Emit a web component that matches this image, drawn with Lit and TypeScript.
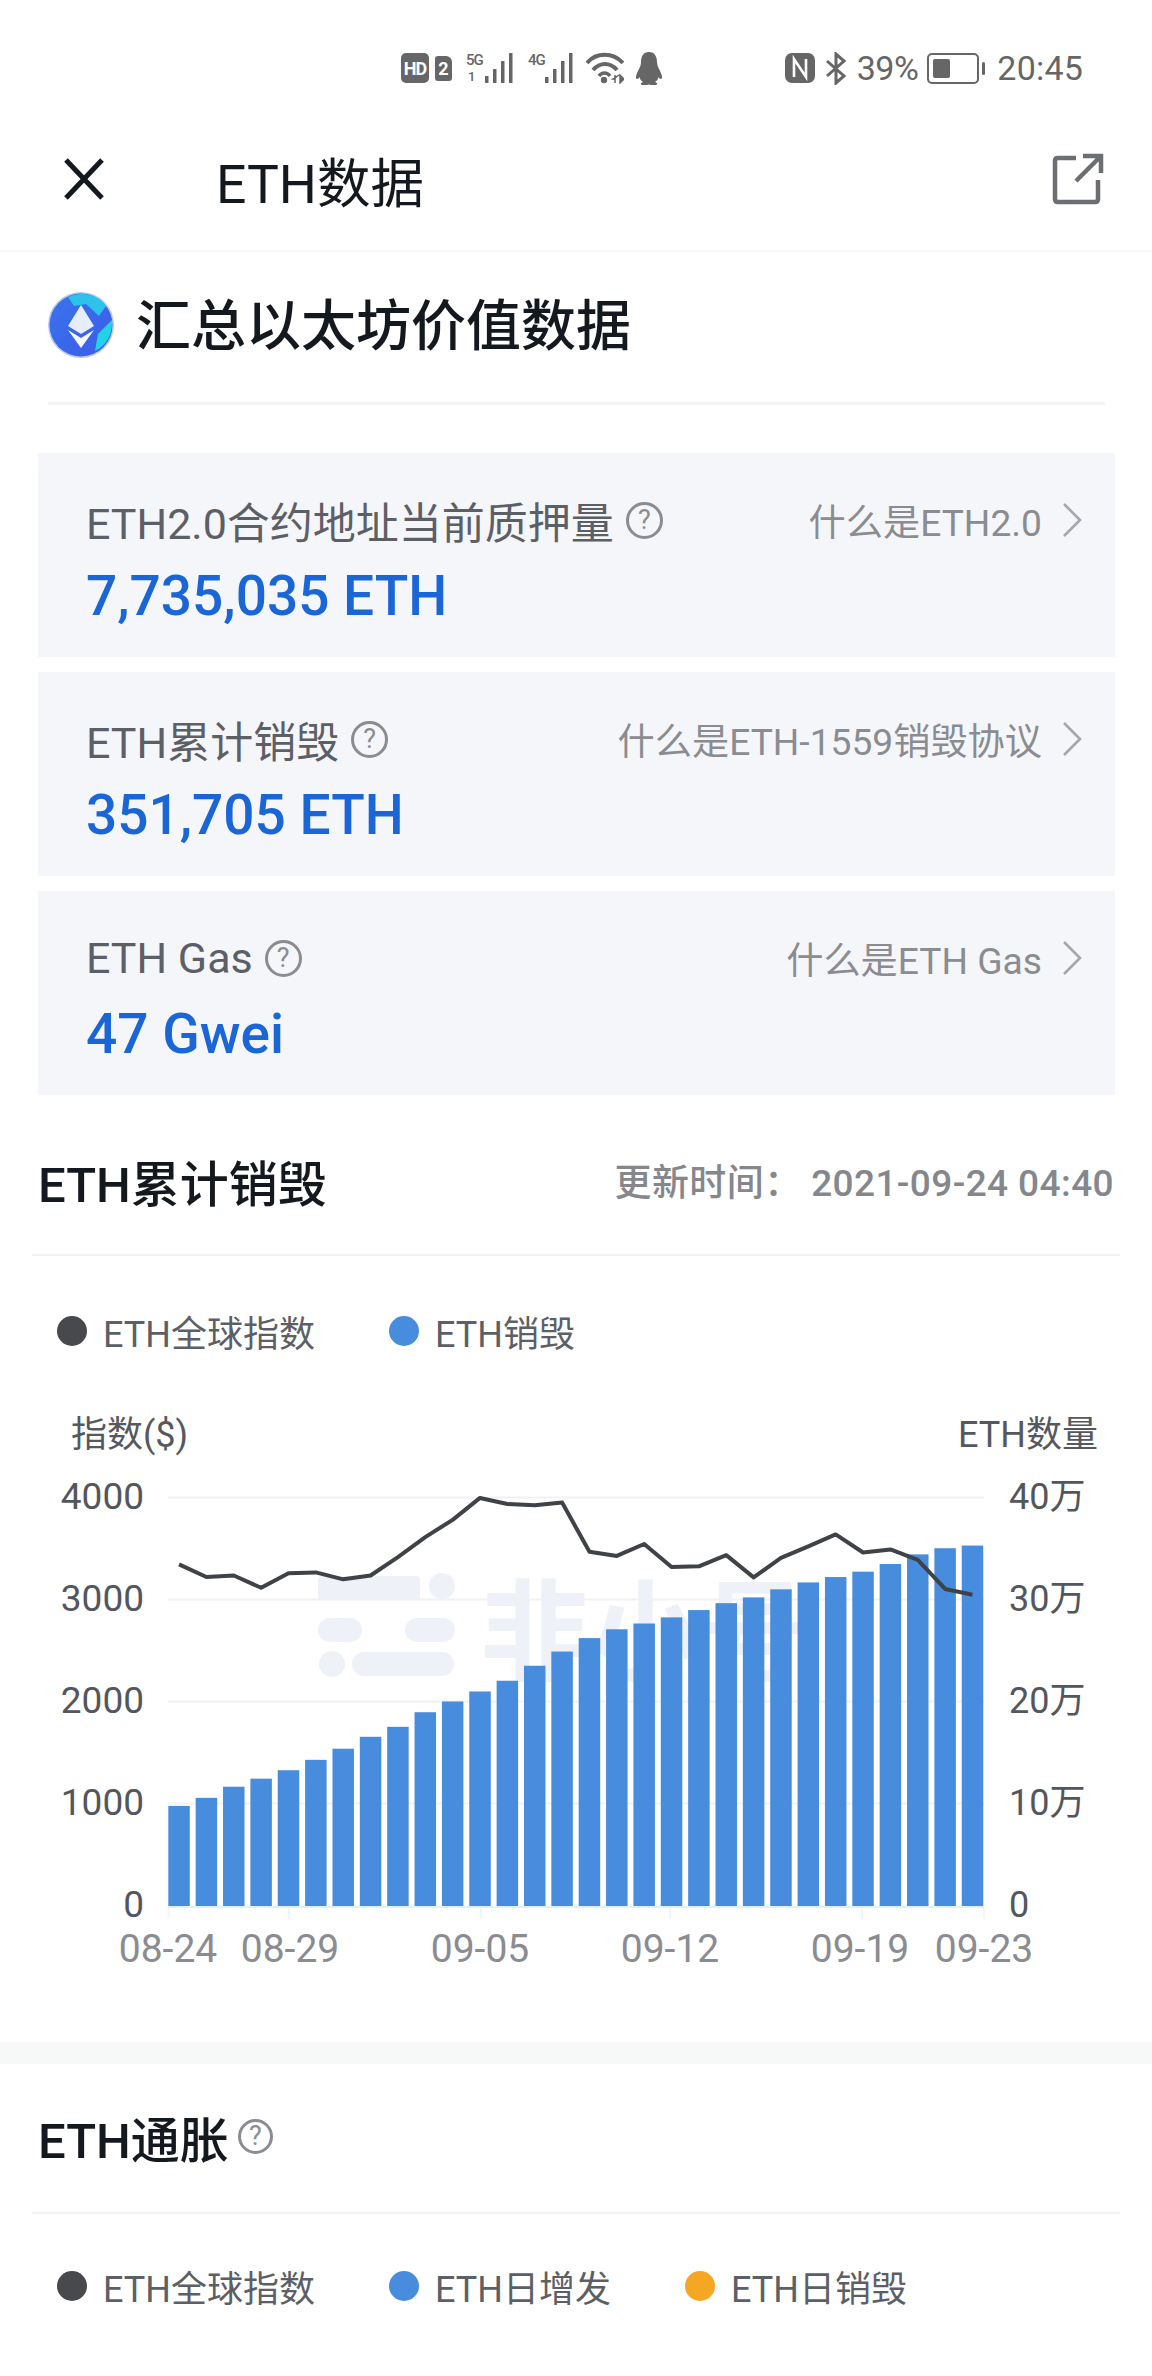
import { LitElement, html, css, svg } from "lit";
import { customElement } from "lit/decorators.js";

const BAR_TOPS = [1113,1092,1063,1042,1020,993,964,933,907,869,841,815,787,748,711,676,653,638,622,603,585,570,549,531,517,503,483,458,442,435];
const LINE = [484,517,513,545,507,505,523,513,465,413,368,311,327,330,323,451,462,431,491,489,460,518,467,437,406,453,445,472,548,563];
const SVG_TOP = 1458;
const toY = (z: number) => 1380 + z / 2.604 - SVG_TOP - 1.5;
const BASE = 1906 - SVG_TOP;
const GRID = [0, 1, 2, 3].map((i) => 1497.5 + i * 102 - SVG_TOP);
const LEFT = ["4000", "3000", "2000", "1000", "0"];
const RIGHT = ["40万", "30万", "20万", "10万", "0"];
const XL: [string, number][] = [["08-24", 168], ["08-29", 290], ["09-05", 480], ["09-12", 670], ["09-19", 860], ["09-23", 984]];
const TICKS = [168.5, 289, 481, 670, 862, 984];
const barX = (i: number) => 168.3 + i * 27.36;

const q = () => html`<span class="q">?</span>`;
const chev = html`<svg class="chev" viewBox="0 0 22 36"><path d="M3 2 L19 18 L3 34" fill="none" stroke="#a4a6ab" stroke-width="2.6"/></svg>`;

@customElement("app-root")
export class AppRoot extends LitElement {
  static styles = css`
    :host { display: block; width: 1152px; height: 2376px; overflow: hidden; background: #fff;
      font-family: Roboto, "Noto Sans CJK SC", sans-serif; color: #14181f; }
    * { box-sizing: border-box; }
    .status { height: 100px; padding: 36px 69px 0 401px; display: flex; align-items: center; color: #666; }
    .status svg { display: block; flex: none; }
    .hd { width: 28px; height: 30px; border-radius: 5px; background: #666; color: #fff; font-size: 18px; font-weight: 700; letter-spacing: -1px;
      display: flex; align-items: center; justify-content: center; }
    .sim2 { width: 17px; height: 25px; border-radius: 3px 6px 3px 3px; background: #666; color: #fff; font-size: 18px; font-weight: 700;
      margin-left: 6px; display: flex; align-items: center; justify-content: center; }
    .net { position: relative; width: 50px; height: 32px; }
    .net b { position: absolute; left: 0; top: 1px; font-size: 15px; line-height: 14px; font-weight: 500; letter-spacing: -1px; }
    .net em { position: absolute; left: 2px; top: 18px; font-size: 13px; line-height: 13px; font-style: normal; font-weight: 500; }
    .net svg { position: absolute; left: 0; top: 0; }
    .batt { width: 52px; height: 31px; border: 2.5px solid #666; border-radius: 5px; padding: 4px; }
    .batt i { display: block; width: 17px; height: 100%; background: #666; border-radius: 2px; }
    .nub { width: 3px; height: 13px; background: #666; border-radius: 2px; margin-left: 3px; }
    .pct { font-size: 34px; margin-left: 10px; margin-right: 9px; letter-spacing: -0.5px; }
    .time { font-size: 34px; margin-left: 12px; letter-spacing: 0.2px; }
    .sp { flex: 1; }

    .nav { height: 152px; padding: 8px 48px 0 64px; display: flex; align-items: center; border-bottom: 2px solid #f8f8f8; }
    .nav h1 { margin: 0 0 0 112px; font-size: 53.500px; font-weight: 400; flex: 1; }
    .hero { margin: 0 47px 0 48px; height: 153px; padding-bottom: 7px; border-bottom: 3px solid #f3f4f6; display: flex; align-items: center; gap: 22px; }
    .hero svg { margin-top: 3px; }
    .hero h2 { margin: 0 0 6px; font-size: 55px; font-weight: 500; }
    .cards { margin-top: 48px; padding: 0 37px 0 38px; display: flex; flex-direction: column; gap: 15px; }
    .card { height: 204px; background: #f5f6fa; padding: 42px 32px 0 48px; }
    .row { display: flex; align-items: center; height: 50px; }
    .label { font-size: 43px; color: #5c5f65; }
    .q { display: inline-flex; width: 37px; height: 37px; margin-left: 12px; border: 3px solid #8a8c91; border-radius: 50%; color: #8a8c91;
      align-items: center; justify-content: center; font-size: 27px; line-height: 1; flex: none; }
    .link { margin-left: auto; font-size: 37.200px; color: #8a8c91; }
    .chev { width: 22px; height: 36px; margin-left: 19px; flex: none; }
    .value { margin-top: 16px; font-size: 55px; line-height: 70px; font-weight: 500; color: #1a66d6; }

    .head { height: 161px; margin: 0 32px; padding: 11px 6px 0; display: flex; align-items: center; border-bottom: 2px solid #f2f3f5; }
    .head.short { height: 150px; padding: 0 6px 4px; }
    .head h3 { margin: 0; font-size: 49px; font-weight: 500; }
    .head .q { width: 35px; height: 35px; margin-left: 9px; }
    .upd { margin-left: auto; font-size: 37px; font-weight: 500; letter-spacing: 0.4px; color: #85878c; }
    .legend { height: 150px; padding-left: 57px; display: flex; align-items: center; gap: 74px; }
    .legend.low { height: 153px; padding-bottom: 9px; }
    .li { display: flex; align-items: center; gap: 16px; font-size: 36px; color: #5c5f65; }
    .dot { width: 30px; height: 30px; border-radius: 50%; flex: none; }
    .axis { height: 50px; margin-bottom: 2px; padding: 0 54px 0 71px; display: flex; justify-content: space-between; align-items: center; font-size: 36px; color: #55585e; }
    .chart { display: block; width: 1152px; height: 584px; }
    .chart text { font-family: Roboto, "Noto Sans CJK SC", sans-serif; font-size: 37px; }
    .chart text.rt { font-size: 36px; }
    .chart text.xl { font-size: 39px; }
    .band { height: 22px; background: #f7f8f8; }
  `;

  private chart() {
    const pts = LINE.map((z, i) => `${barX(i) + 10.75},${toY(z)}`).join(" ");
    return html`<svg class="chart" viewBox="0 0 1152 584">
      ${GRID.map((y) => svg`<line x1="168" x2="984" y1=${y} y2=${y} stroke="#f1f2f5" stroke-width="2"/>`)}
      <g fill="#eef1f7">
        <rect x="318" y="118" width="102" height="24" rx="4"/><circle cx="442" cy="128" r="13"/>
        <rect x="318" y="160" width="44" height="24" rx="12"/><rect x="405" y="160" width="50" height="24" rx="12"/>
        <circle cx="332" cy="206" r="13"/><rect x="352" y="194" width="102" height="24" rx="12"/>
      </g>
      <text x="480" y="214" style="font-size:110px;font-weight:700" fill="#eef1f7">非小号</text>
      ${BAR_TOPS.map((z, i) => svg`<rect x=${barX(i)} y=${toY(z)} width="21.5" height=${BASE - toY(z)} fill="#488ddd"/>`)}
      <line x1="168" x2="984" y1=${BASE + 1} y2=${BASE + 1} stroke="#def0fd" stroke-width="2"/>
      ${TICKS.map((x) => svg`<line x1=${x} x2=${x} y1=${BASE + 2} y2=${BASE + 13} stroke="#eef5fb" stroke-width="2"/>`)}
      <polyline points=${pts} fill="none" stroke="#3f4246" stroke-width="4" stroke-linejoin="round"/>
      ${LEFT.map((t, i) => svg`<text x="144" y=${1497.5 + i * 102 - SVG_TOP + 11.5} text-anchor="end" fill="#53565c">${t}</text>`)}
      ${RIGHT.map((t, i) => svg`<text class="rt" x="1009" y=${1497.5 + i * 102 - SVG_TOP + 11.5} fill="#53565c">${t}</text>`)}
      ${XL.map(([t, x]) => svg`<text class="xl" x=${x} y="504" text-anchor="middle" fill="#8a8c91">${t}</text>`)}
    </svg>`;
  }

  render() {
    return html`
      <div class="status">
        <span class="hd">HD</span><span class="sim2">2</span>
        <span class="net" style="margin-left:14px"><b>5G</b><em>1</em><svg width="50" height="32" viewBox="0 0 50 32" fill="#666">
          <rect x="19" y="24" width="3.500" height="7"/><rect x="27" y="17" width="3.500" height="14"/><rect x="35" y="9" width="3.500" height="22"/><rect x="43" y="1" width="3.500" height="30"/></svg></span>
        <span class="net" style="margin-left:12px;width:50px"><b>4G</b><svg width="50" height="32" viewBox="0 0 50 32" fill="#666">
          <rect x="17" y="25" width="3.500" height="6"/><rect x="25" y="17" width="3.500" height="14"/><rect x="33" y="9" width="3.500" height="22"/><rect x="41" y="1" width="3.500" height="30"/></svg></span>
        <svg style="margin-left:8px" width="38" height="32" viewBox="0 0 38 32" fill="none" stroke="#666" stroke-width="4">
          <path d="M1 11 C10 0 27 0 37 11"/><path d="M7 18 C14 10 24 10 31 18"/><path d="M13 24 C16 20 21 20 24 24" stroke-width="3.500"/><circle cx="18" cy="28" r="3.200" fill="#666" stroke="none"/><path d="M29 23 V31 M33 23 L27 27 H29 M34 23 V31 L38 27 Z" stroke-width="1.500" fill="#666"/></svg>
        <svg style="margin-left:10px" width="30" height="33" viewBox="0 0 30 33" fill="#666">
          <path d="M15 0 C9 0 7 5 7 10 C7 13 6 15 4 19 C2 23 1 27 3 27 C4 27 5 26 5.500 25 C6 27 7 29 9 30 C6 31 6 33 9 33 L13 33 Q15 32 17 33 L21 33 C24 33 24 31 21 30 C23 29 24 27 24.500 25 C25 26 26 27 27 27 C29 27 28 23 26 19 C24 15 23 13 23 10 C23 5 21 0 15 0 Z"/></svg>
        <span class="sp"></span>
        <svg width="30" height="30" viewBox="0 0 30 30"><rect width="30" height="30" rx="7" fill="#666"/><path d="M9 24 V6 L21 24 V6" fill="none" stroke="#fff" stroke-width="2.600"/></svg>
        <svg style="margin-left:10px" width="22" height="33" viewBox="0 0 22 33" fill="none" stroke="#666" stroke-width="3"><path d="M2 9 L19 24 L11 31 V2 L19 9 L2 24"/></svg>
        <span class="pct">39%</span>
        <span class="batt"><i></i></span><span class="nub"></span>
        <span class="time">20:45</span>
      </div>
      <div class="nav">
        <svg width="40" height="42" viewBox="0 0 40 42" stroke="#14181f" stroke-width="5" fill="none"><path d="M2 2 L38 40 M38 2 L2 40"/></svg>
        <h1>ETH数据</h1>
        <svg width="52" height="52" viewBox="0 0 52 52" fill="none" stroke="#6b6e73" stroke-width="4.500"><path d="M24 5 H6 Q3 5 3 8 V46 Q3 49 6 49 H43 Q46 49 46 46 V27"/><path d="M24 28 L49 3 M31 3 H49 V20"/></svg>
      </div>
      <div class="hero">
        <svg width="66" height="66" viewBox="0 0 66 66">
          <defs><linearGradient id="g" x1="0" y1="0" x2="1" y2="1"><stop offset="0" stop-color="#3a74ea"/><stop offset="1" stop-color="#3b5bea"/></linearGradient></defs>
          <circle cx="33" cy="33" r="33" fill="#b9c6f4"/><circle cx="33" cy="33" r="31.500" fill="url(#g)"/>
          <path d="M20 5 C34 -1 50 2 58 14 L51 24 L38 12 L26 14 Z" fill="#2bc3ea"/>
          <path d="M64 28 C65 42 58 54 47 59 L50 42 Z" fill="#22d3e6"/>
          <path d="M33 13 L20 34 L33 42 L46 34 Z" fill="#e6edfc"/><path d="M20 38 L33 46 L46 38 L33 56 Z" fill="#f6f8fe"/>
        </svg>
        <h2>汇总以太坊价值数据</h2>
      </div>
      <div class="cards">
        <div class="card"><div class="row"><span class="label">ETH2.0合约地址当前质押量</span>${q()}<span class="link">什么是ETH2.0</span>${chev}</div><div class="value">7,735,035 ETH</div></div>
        <div class="card"><div class="row"><span class="label">ETH累计销毁</span>${q()}<span class="link">什么是ETH-1559销毁协议</span>${chev}</div><div class="value">351,705 ETH</div></div>
        <div class="card"><div class="row"><span class="label">ETH Gas</span>${q()}<span class="link">什么是ETH Gas</span>${chev}</div><div class="value">47 Gwei</div></div>
      </div>
      <div class="head"><h3>ETH累计销毁</h3><span class="upd">更新时间： 2021-09-24 04:40</span></div>
      <div class="legend">
        <span class="li"><i class="dot" style="background:#48494d"></i>ETH全球指数</span>
        <span class="li"><i class="dot" style="background:#488ddd"></i>ETH销毁</span>
      </div>
      <div class="axis"><span>指数($)</span><span>ETH数量</span></div>
      ${this.chart()}
      <div class="band"></div>
      <div class="head short"><h3>ETH通胀</h3>${q()}</div>
      <div class="legend low">
        <span class="li"><i class="dot" style="background:#48494d"></i>ETH全球指数</span>
        <span class="li"><i class="dot" style="background:#488ddd"></i>ETH日增发</span>
        <span class="li"><i class="dot" style="background:#f5a623"></i>ETH日销毁</span>
      </div>
      <div class="axis"><span>指数($)</span><span>ETH数量</span></div>
    `;
  }
}
